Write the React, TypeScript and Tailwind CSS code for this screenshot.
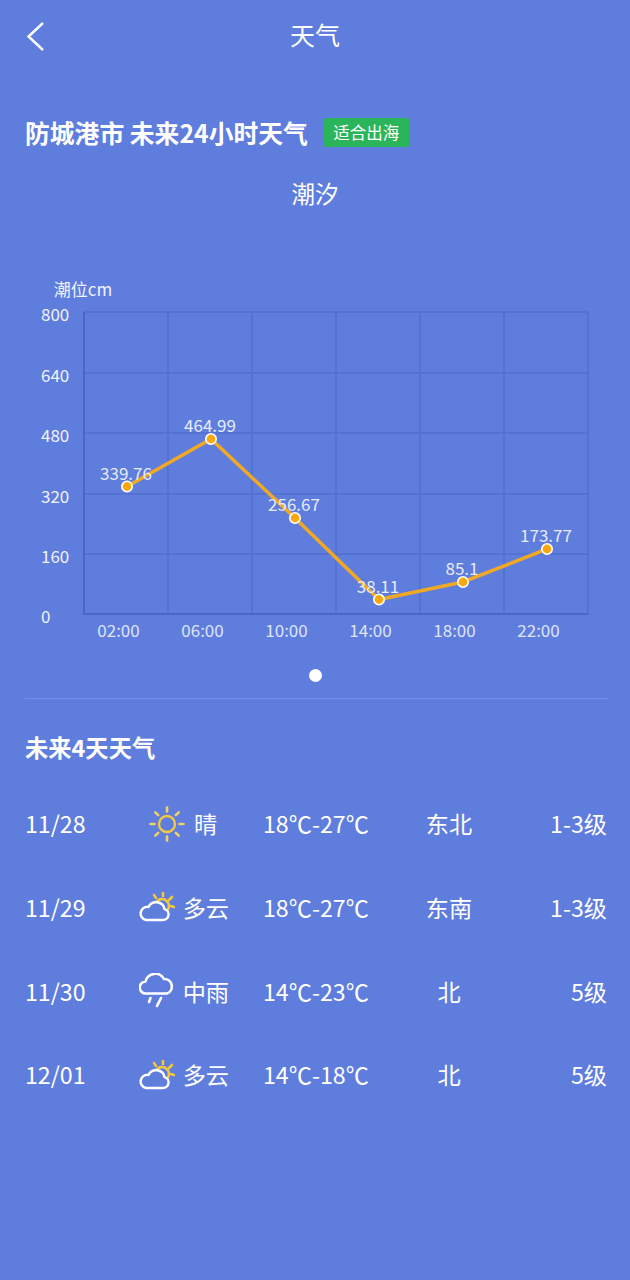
const FONT = '"Noto Sans CJK SC", "Noto Sans", sans-serif';

const gridX = [84, 168, 252, 336, 420, 504, 588];
const gridY = [312, 373, 433, 494, 554, 614];
const yLabels = [
  { v: '800', y: 315 },
  { v: '640', y: 376 },
  { v: '480', y: 436 },
  { v: '320', y: 497 },
  { v: '160', y: 557 },
  { v: '0', y: 617 },
];
const points = [
  { x: 127, y: 486.5, label: '339.76', time: '02:00', tx: 118.5 },
  { x: 211, y: 439, label: '464.99', time: '06:00', tx: 202.5 },
  { x: 295, y: 518, label: '256.67', time: '10:00', tx: 286.5 },
  { x: 379, y: 599.5, label: '38.11', time: '14:00', tx: 370.5 },
  { x: 463, y: 582, label: '85.1', time: '18:00', tx: 454.5 },
  { x: 547, y: 549, label: '173.77', time: '22:00', tx: 538.5 },
];

function TideChart() {
  return (
    <svg width="630" height="380" viewBox="0 270 630 380" className="block" style={{ fontFamily: FONT }}>
      <text x="83" y="296" fontSize="17" fill="#f0f3fd" textAnchor="middle">潮位cm</text>
      {gridY.slice(0, 5).map((y) => (
        <line key={y} x1="84" x2="588" y1={y} y2={y} stroke="#5472d2" strokeWidth="2" />
      ))}
      {gridX.slice(1).map((x) => (
        <line key={x} x1={x} x2={x} y1="312" y2="614" stroke="#5472d2" strokeWidth="2" />
      ))}
      <line x1="84" x2="84" y1="312" y2="615" stroke="#4967c6" strokeWidth="2" />
      <line x1="84" x2="588" y1="614" y2="614" stroke="#4967c6" strokeWidth="2" />
      {yLabels.map((l) => (
        <text key={l.v} x="41" y={l.y + 6} fontSize="17" fill="#f0f3fd">{l.v}</text>
      ))}
      {points.map((p) => (
        <text key={p.time} x={p.tx} y="637" fontSize="17" fill="#dfe5f9" textAnchor="middle">{p.time}</text>
      ))}
      <polyline
        points={points.map((p) => `${p.x},${p.y}`).join(' ')}
        fill="none"
        stroke="#f0a825"
        strokeWidth="3.5"
      />
      {points.map((p) => (
        <circle key={p.x} cx={p.x} cy={p.y} r="5.2" fill="#f9a90e" stroke="#ffffff" strokeWidth="1.6" />
      ))}
      {points.map((p) => (
        <text key={p.label} x={p.x - 1} y={p.y - 7} fontSize="17" fill="#e6ebfb" textAnchor="middle">{p.label}</text>
      ))}
    </svg>
  );
}

function SunIcon() {
  const rays = [0, 45, 90, 135, 180, 225, 270, 315];
  return (
    <svg width="36" height="36" viewBox="0 0 36 36" fill="none" className="shrink-0">
      <circle cx="18" cy="18" r="8" stroke="#f0c93f" strokeWidth="2.4" />
      {rays.map((a) => (
        <line
          key={a}
          x1="18"
          y1="1.5"
          x2="18"
          y2="5.5"
          stroke="#efd268"
          strokeWidth="2.6"
          strokeLinecap="round"
          transform={`rotate(${a} 18 18)`}
        />
      ))}
    </svg>
  );
}

function CloudSunIcon() {
  return (
    <svg width="36" height="30" viewBox="0 0 36 30" fill="none" className="shrink-0">
      <circle cx="23" cy="14" r="7" stroke="#f0c93f" strokeWidth="2.6" />
      <g stroke="#f0c93f" strokeWidth="2.6" strokeLinecap="round">
        <line x1="15" y1="3" x2="17" y2="6" />
        <line x1="24" y1="1" x2="24" y2="4" />
        <line x1="33" y1="5" x2="30" y2="8" />
        <line x1="35" y1="15" x2="32" y2="14" />
      </g>
      <path
        d="M7 28h17a5.5 5.5 0 0 0 1.5-10.8 8.5 8.5 0 0 0-16-2.2 6.5 6.5 0 0 0-2.5 13z"
        stroke="#ffffff"
        strokeWidth="2.4"
        fill="#5f7ddd"
        strokeLinejoin="round"
      />
    </svg>
  );
}

function RainIcon() {
  return (
    <svg width="36" height="36" viewBox="0 0 36 36" fill="none" stroke="#ffffff" strokeWidth="2.6" strokeLinecap="round" strokeLinejoin="round" className="shrink-0">
      <path d="M7 20.5a6 6 0 0 1-.5-12A10 10 0 0 1 25 6a7.5 7.5 0 0 1 3 14.5z" />
      <line x1="11.5" y1="25" x2="10" y2="29" />
      <line x1="22" y1="25" x2="18" y2="33" />
    </svg>
  );
}

const days = [
  { date: '11/28', icon: <SunIcon />, text: '晴', temp: '18℃-27℃', wind: '东北', level: '1-3级', sun: true },
  { date: '11/29', icon: <CloudSunIcon />, text: '多云', temp: '18℃-27℃', wind: '东南', level: '1-3级', sun: false },
  { date: '11/30', icon: <RainIcon />, text: '中雨', temp: '14℃-23℃', wind: '北', level: '5级', sun: false },
  { date: '12/01', icon: <CloudSunIcon />, text: '多云', temp: '14℃-18℃', wind: '北', level: '5级', sun: false },
];

export default function App() {
  return (
    <div className="h-[1280px] w-[630px] overflow-hidden bg-[#5f7ddd] text-white" style={{ fontFamily: FONT }}>
      <header className="relative flex h-[68px] items-center justify-center">
        <svg width="20" height="32" viewBox="0 0 20 32" fill="none" className="absolute left-[25px] top-[21px]">
          <path d="M18 2 3.5 15.5 18 29" stroke="#ffffff" strokeWidth="2.4" />
        </svg>
        <h1 className="text-[25px] leading-[36px] font-normal">天气</h1>
      </header>

      <div className="mt-[49px] flex h-[30px] items-center pl-[25px]">
        <h2 className="text-[24.8px] leading-[30px] font-bold">防城港市 未来24小时天气</h2>
        <span className="ml-[16px] flex h-[29px] w-[85px] items-center justify-center rounded-[2px] bg-[#2bb55a] text-[16.5px]">
          适合出海
        </span>
      </div>

      <p className="mt-[28px] text-center text-[23.5px] leading-[36px]">潮汐</p>

      <div className="mt-[59px]">
        <TideChart />
      </div>

      <div className="mt-[19px] flex justify-center">
        <span className="h-[13px] w-[13px] rounded-full bg-white" />
      </div>

      <div className="mx-[25px] mt-[16px] h-px w-[583px] bg-[#7590e3]" />

      <h3 className="mt-[31px] pl-[25px] text-[23.3px] leading-[34px] font-bold">未来4天天气</h3>

      <div className="mt-[18px] flex flex-col pl-[25px] pr-[23px] text-[23.2px]">
        {days.map((d) => (
          <div key={d.date} className="flex h-[83.67px] items-center">
            <span className="w-[114px]">{d.date}</span>
            <div className={d.sun ? 'flex w-[90px] items-center gap-[9px] pl-[10px]' : 'flex w-[90px] items-center justify-end gap-2'}>
              {d.icon}
              <span className="whitespace-nowrap">{d.text}</span>
            </div>
            <span className="ml-[34px] w-[130px] whitespace-nowrap">{d.temp}</span>
            <span className="w-[112px] text-center">{d.wind}</span>
            <span className="flex-1 text-right">{d.level}</span>
          </div>
        ))}
      </div>
    </div>
  );
}
